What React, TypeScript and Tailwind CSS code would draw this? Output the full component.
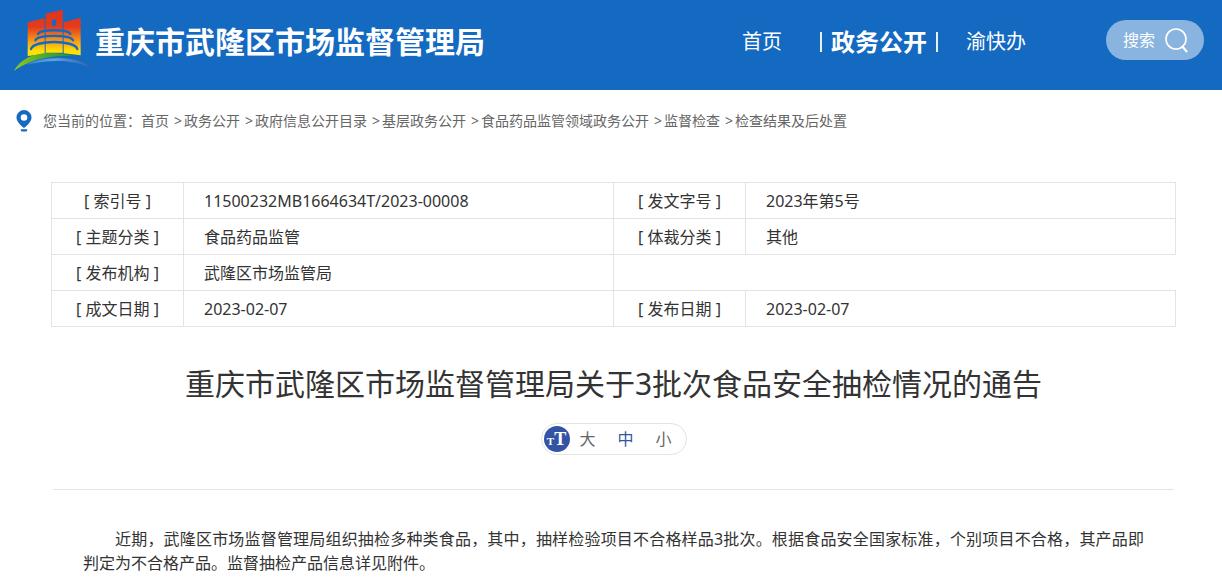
import { useState } from "react"

interface Campo {
  etiqueta: string
  valor: string
}

const menu = [
  { texto: "首页", activo: false },
  { texto: "政务公开", activo: true },
  { texto: "渝快办", activo: false },
]

const ruta = [
  "首页",
  "政务公开",
  "政府信息公开目录",
  "基层政务公开",
  "食品药品监管领域政务公开",
  "监督检查",
  "检查结果及后处置",
]

const filas: Campo[][] = [
  [
    { etiqueta: "索引号", valor: "11500232MB1664634T/2023-00008" },
    { etiqueta: "发文字号", valor: "2023年第5号" },
  ],
  [
    { etiqueta: "主题分类", valor: "食品药品监管" },
    { etiqueta: "体裁分类", valor: "其他" },
  ],
  [{ etiqueta: "发布机构", valor: "武隆区市场监管局" }],
  [
    { etiqueta: "成文日期", valor: "2023-02-07" },
    { etiqueta: "发布日期", valor: "2023-02-07" },
  ],
]

const tamanos = ["大", "中", "小"]

function Logo() {
  return (
    <svg viewBox="40 24 246 192" className="h-16 w-[82px] shrink-0" aria-hidden="true">
      <defs>
        <linearGradient id="torre" x1="0" y1="29" x2="0" y2="167" gradientUnits="userSpaceOnUse">
          <stop offset="0" stopColor="#e2331b" />
          <stop offset="0.38" stopColor="#e33c1c" />
          <stop offset="0.68" stopColor="#f79a1c" />
          <stop offset="0.9" stopColor="#ffe000" />
        </linearGradient>
        <linearGradient id="colina" x1="42" y1="0" x2="225" y2="0" gradientUnits="userSpaceOnUse">
          <stop offset="0" stopColor="#8fcb1f" />
          <stop offset="0.4" stopColor="#5cae2c" />
          <stop offset="1" stopColor="#1f8f3a" />
        </linearGradient>
        <linearGradient id="rio" x1="80" y1="0" x2="284" y2="0" gradientUnits="userSpaceOnUse">
          <stop offset="0" stopColor="#2f83d6" />
          <stop offset="0.4" stopColor="#5fa2e2" />
          <stop offset="1" stopColor="#2a5ca8" />
        </linearGradient>
      </defs>
      <g fill="url(#torre)">
        <path d="M84 67 135 55V162L84 168Z" />
        <path d="M138 41 189 29V158H138Z" />
        <path d="M192 67 243 53V166L192 160Z" />
      </g>
      <ellipse cx="163" cy="68" rx="7" ry="10" fill="#1469c1" />
      <g fill="none" stroke="#1469c1" strokeWidth="7" strokeLinecap="round">
        <path d="M115 102C121 87 206 87 212 102" />
        <path d="M107 121C113 103 214 103 220 121" />
        <path d="M94 147C101 119 226 119 233 147" />
      </g>
      <path d="M42 213C62 178 100 159 150 159C180 159 205 162 225 169C150 164 90 180 42 213Z" fill="url(#colina)" />
      <path d="M80 194C125 170 235 160 284 210C225 176 155 178 80 194Z" fill="url(#rio)" />
    </svg>
  )
}

function Cabecera() {
  return (
    <header className="flex h-[90px] items-center justify-between bg-[#1469c1] pb-2.5 pl-[13px] pr-[18px] text-white">
      <a href="#" className="flex items-center">
        <Logo />
        <span className="whitespace-nowrap pt-1 text-[30px] font-bold leading-10">重庆市武隆区市场监督管理局</span>
      </a>
      <div className="flex items-center gap-20">
        <nav className="flex items-center whitespace-nowrap pt-1 text-xl">
          {menu.map((m) =>
            m.activo ? (
              <a key={m.texto} href="#" className="ml-[38px] mr-7 flex items-center gap-[9px] text-2xl font-bold">
                <span className="h-5 w-0.5 bg-white/90" />
                {m.texto}
                <span className="h-5 w-0.5 bg-white/90" />
              </a>
            ) : (
              <a key={m.texto} href="#">{m.texto}</a>
            )
          )}
        </nav>
        <button type="button" className="flex h-10 w-[98px] items-center justify-center gap-2 rounded-full bg-white/50 pl-0.5">
          搜索
          <svg viewBox="0 0 26 26" className="size-[26px]" fill="none" stroke="currentColor" strokeWidth="1.6" aria-hidden="true">
            <circle cx="13" cy="12" r="10" />
            <path d="M19 19 24 25" strokeWidth="2" />
          </svg>
        </button>
      </div>
    </header>
  )
}

function Ruta() {
  return (
    <nav className="flex items-center whitespace-nowrap px-4 pt-5 text-sm text-[#666]">
      <svg viewBox="0 0 16 22" className="mr-[11px] h-[22px] w-4" aria-hidden="true">
        <path fillRule="evenodd" fill="#1469c1" d="M8 0a7.500 7.500 0 0 1 7.500 7.500C15.500 12 10.500 16 8 18C5.500 16 .5 12 .5 7.500A7.500 7.500 0 0 1 8 0ZM8 4.200a3.300 3.300 0 1 0 0 6.600a3.300 3.300 0 0 0 0-6.600Z" />
        <path fill="#1469c1" d="M4.500 19.200H11.500L10.500 21.500H5.500Z" />
      </svg>
      <span>您当前的位置：</span>
      {ruta.map((r, i) => (
        <span key={r} className="flex">
          {i > 0 && <span className="w-[15px] pr-0.5 text-right">&gt;</span>}
          <a href="#">{r}</a>
        </span>
      ))}
    </nav>
  )
}

export default function App() {
  const [tamano, setTamano] = useState("中")

  return (
    <div className="bg-white font-['Noto_Sans','Noto_Sans_CJK_SC',sans-serif] text-base text-[#333]">
      <Cabecera />
      <Ruta />
      <main className="ml-[51px] mr-[46px] pt-[50px]">
        <table className="w-full table-fixed border-collapse">
          <colgroup>
            <col className="w-[132px]" />
            <col />
            <col className="w-[132px]" />
            <col />
          </colgroup>
          <tbody>
            {filas.map((fila) => (
              <tr key={fila[0].etiqueta} className="h-9">
                {fila.map((c) => [
                  <th key={c.etiqueta} scope="row" className="border border-[#e3e3e3] font-normal">
                    [ {c.etiqueta} ]
                  </th>,
                  <td key={c.etiqueta + "-valor"} className="border border-[#e3e3e3] px-5">
                    {c.valor}
                  </td>,
                ])}
              </tr>
            ))}
          </tbody>
        </table>

        <h1 className="mt-[35px] text-center text-[30px] leading-[44px]">
          重庆市武隆区市场监督管理局关于3批次食品安全抽检情况的通告
        </h1>

        <div className="mx-auto mt-[17px] flex h-8 w-[146px] items-center rounded-full border border-[#e3e3e3] pl-0.5">
          <span className="mr-2.5 flex size-[26px] shrink-0 items-baseline justify-center rounded-full bg-[#3354a5] font-['Liberation_Serif',serif] text-lg font-bold leading-[26px] text-white" aria-hidden="true">
            <span className="text-[11px]">T</span>T
          </span>
          <div className="flex gap-[22px]">
            {tamanos.map((t) => (
              <button
                key={t}
                type="button"
                onClick={() => setTamano(t)}
                className={t === tamano ? "text-[#3354a5]" : "text-[#666]"}
              >
                {t}
              </button>
            ))}
          </div>
        </div>

        <hr className="mx-0.5 mt-[34px] border-[#e3e3e3]" />

        <p className="mt-[37px] px-8 text-justify indent-8 leading-6">
          近期，武隆区市场监督管理局组织抽检多种类食品，其中，抽样检验项目不合格样品3批次。根据食品安全国家标准，个别项目不合格，其产品即判定为不合格产品。监督抽检产品信息详见附件。
        </p>
      </main>
    </div>
  )
}
